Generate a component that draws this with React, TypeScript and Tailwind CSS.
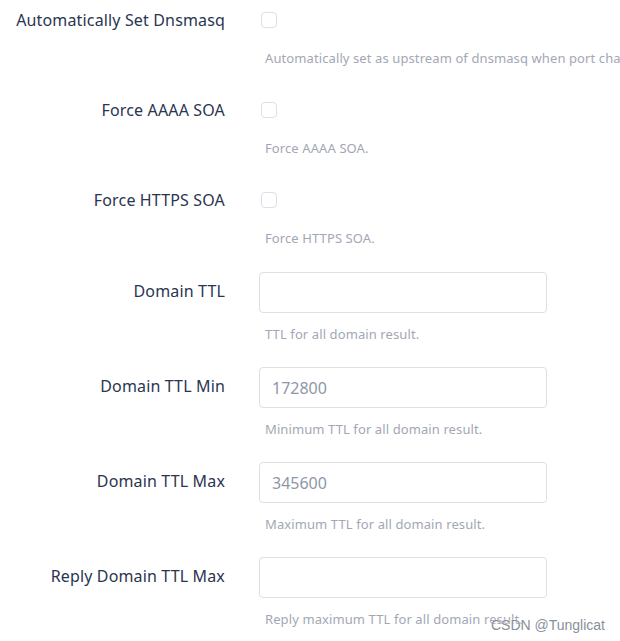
import React from "react";

type Field =
  | { kind: "check"; label: string; desc: string }
  | { kind: "input"; label: string; desc: string; placeholder?: string };

const fields: Field[] = [
  { kind: "check", label: "Automatically Set Dnsmasq", desc: "Automatically set as upstream of dnsmasq when port changes." },
  { kind: "check", label: "Force AAAA SOA", desc: "Force AAAA SOA." },
  { kind: "check", label: "Force HTTPS SOA", desc: "Force HTTPS SOA." },
  { kind: "input", label: "Domain TTL", desc: "TTL for all domain result." },
  { kind: "input", label: "Domain TTL Min", desc: "Minimum TTL for all domain result.", placeholder: "172800" },
  { kind: "input", label: "Domain TTL Max", desc: "Maximum TTL for all domain result.", placeholder: "345600" },
  { kind: "input", label: "Reply Domain TTL Max", desc: "Reply maximum TTL for all domain result." },
];

const font = { fontFamily: '"Noto Sans", "Open Sans", "Liberation Sans", sans-serif' };

function Row({ f }: { f: Field }) {
  if (f.kind === "check") {
    return (
      <div className="flex h-[90px]">
        <div className="w-[225px] shrink-0 h-10 leading-10 text-right text-base tracking-[0.15px] text-[#2a3550] whitespace-nowrap">
          {f.label}
        </div>
        <div className="ml-[34px] flex flex-col">
          <div className="h-10 flex items-center">
            <span className="ml-[2px] w-4 h-4 rounded-[4px] border border-[#dcdfe6] bg-white" />
          </div>
          <p className="mt-[9px] h-[18px] leading-[18px] pl-[6px] text-[13px] tracking-[0.1px] text-[#a3a7b5] whitespace-nowrap">{f.desc}</p>
        </div>
      </div>
    );
  }
  return (
    <div className="flex h-[95px]">
      <div className="w-[225px] shrink-0 mt-[1px] h-[41px] leading-[41px] text-right text-base tracking-[0.15px] text-[#2a3550] whitespace-nowrap">
        {f.label}
      </div>
      <div className="ml-[34px] flex flex-col">
        <div className="mt-[2px] w-[288px] h-[41px] rounded-[4px] border border-[#dcdfe6] bg-white px-3 flex items-center text-base text-[#8e97a8]">
          {f.placeholder}
        </div>
        <p className="mt-[12px] h-[18px] leading-[18px] pl-[6px] text-[13px] tracking-[0.1px] text-[#a3a7b5] whitespace-nowrap">{f.desc}</p>
      </div>
    </div>
  );
}

export default function App() {
  return (
    <div className="relative w-[620px] h-[641px] overflow-hidden bg-white" style={font}>
      {fields.map((f) => (
        <Row key={f.label} f={f} />
      ))}
      <span className="absolute right-[15px] top-[615px] text-[14px] text-[#8a8f99] [text-shadow:0_0_2px_#fff]" style={{ fontFamily: '"Liberation Sans", Arial, sans-serif' }}>
        CSDN @Tunglicat
      </span>
    </div>
  );
}
